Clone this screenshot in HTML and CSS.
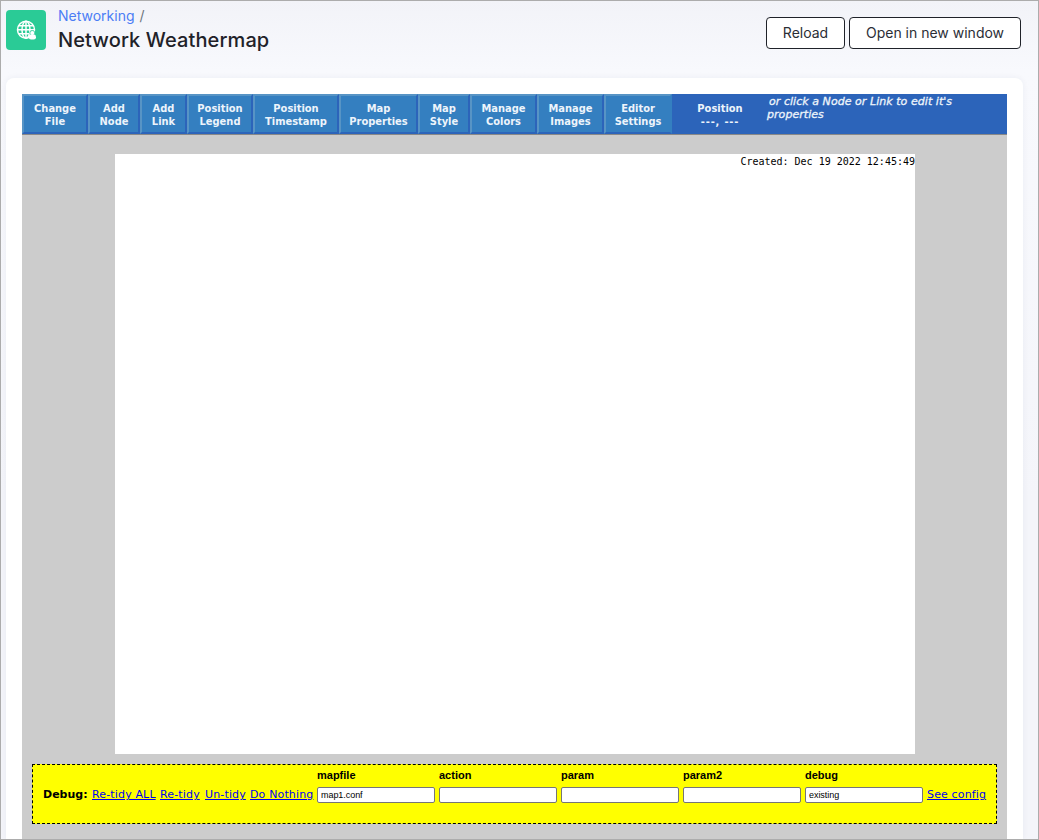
FILE: index.html
```html
<!DOCTYPE html>
<html lang="en">
<head>
<meta charset="utf-8">
<title>Network Weathermap</title>
<link rel="stylesheet" href="styles.css">
</head>
<body>
<div class="page">
  <header class="header">
    <div class="logo">
      <svg width="20" height="20" viewBox="0 0 20 20" fill="none" stroke="#fff" stroke-width="1.5">
        <circle cx="10" cy="9.8" r="8.5"/>
        <ellipse cx="10" cy="9.8" rx="4" ry="8.5"/>
        <path d="M10 1.3v17M2.5 5.8h15M1.5 9.8h17M2.5 13.8h15"/>
        <circle cx="16.3" cy="13" r="2.5" fill="#fff" stroke="#2acb96" stroke-width=".8"/>
        <rect x="12.8" y="14.6" width="7.2" height="5" rx="2.3" fill="#fff" stroke="none"/>
      </svg>
    </div>
    <div class="heading">
      <div class="crumb"><a class="crumb-link">Networking</a><span class="slash">/</span></div>
      <h1 class="title">Network Weathermap</h1>
    </div>
    <div class="actions">
      <button class="btn reload"><span>Reload</span></button>
      <button class="btn open"><span>Open in new window</span></button>
    </div>
  </header>
  <main class="card">
    <nav class="toolbar">
      <div class="tool">Change<br>File</div>
      <div class="tool">Add<br>Node</div>
      <div class="tool">Add<br>Link</div>
      <div class="tool">Position<br>Legend</div>
      <div class="tool">Position<br>Timestamp</div>
      <div class="tool">Map<br>Properties</div>
      <div class="tool">Map<br>Style</div>
      <div class="tool">Manage<br>Colors</div>
      <div class="tool">Manage<br>Images</div>
      <div class="tool last">Editor<br>Settings</div>
      <div class="position">Position<br><span class="coords">---, ---</span></div>
      <div class="hint"><span class="hint-first">or click a Node or Link to edit it's</span><br>properties</div>
    </nav>
    <section class="workspace">
      <div class="map"><span class="created">Created: Dec 19 2022 12:45:49</span></div>
      <form class="debug">
        <b class="debug-label">Debug:</b>
        <a class="link retidy-all">Re-tidy ALL</a>
        <a class="link retidy">Re-tidy</a>
        <a class="link untidy">Un-tidy</a>
        <a class="link nothing">Do Nothing</a>
        <label class="field">mapfile<input value="map1.conf"></label>
        <label class="field">action<input></label>
        <label class="field">param<input></label>
        <label class="field">param2<input></label>
        <label class="field">debug<input value="existing"></label>
        <a class="link config">See config</a>
      </form>
    </section>
  </main>
</div>
</body>
</html>
```
FILE: styles.css
```css
* { box-sizing: border-box; }
body { margin: 0; font-family: Inter, sans-serif; }
.page {
  width: 1039px; height: 840px; overflow: hidden;
  border: 1px solid #acacac;
  background: linear-gradient(#f2f3f8, #f8f9fd 70px, #f4f5fa 500px);
  display: flex; flex-direction: column;
}
.header { display: flex; height: 77px; flex: none; padding: 0 17px 0 5px; }
.logo {
  width: 40px; height: 40px; margin-top: 9px; border-radius: 4px;
  background: #2acb96; display: flex; align-items: center; justify-content: center;
}
.heading { margin-left: 12px; padding-top: 6px; flex: 1; white-space: nowrap; }
.crumb { font-size: 14px; line-height: 18px; }
.crumb-link { color: #4b7df5; }
.slash { color: #6c757d; margin-left: 5px; }
.title { margin: 3px 0 0; font-size: 20px; line-height: 24px; font-weight: 500; letter-spacing: .11px; color: #1f2229; }
.actions { display: flex; gap: 4px; margin-top: 16px; }
.btn {
  height: 32px; padding: 0 0 2px; border: 1px solid #1f2229; border-radius: 4px;
  background: #fff; color: #2b2e36; font: 14px Inter, sans-serif;
}
.reload { width: 79px; }
.open { width: 172px; }
.card {
  flex: 1; margin: 0 15px 0 5px; padding: 16px 16px 0;
  background: #fff; border-radius: 8px 8px 0 0;
  box-shadow: 0 0 6px rgba(40, 50, 90, .06);
  display: flex; flex-direction: column;
}
.toolbar {
  display: grid; flex: none; height: 41px;
  grid-template-columns: 66px 52px 47px 66px 86px 79px 52px 67px 67px 68px 95px 1fr;
  background: #2c64ba; border-bottom: 1px solid #888;
  color: #edf4fb; font: 700 11px/13px "DejaVu Sans Condensed", "DejaVu Sans", sans-serif;
  font-stretch: condensed; text-align: center; white-space: nowrap;
}
.tool {
  padding-top: 6px; background: #347fc0;
  border: 2px solid; border-color: #5794c5 #2c64ba #2c64ba #5794c5;
}
.last { border-right-color: #347fc0; }
.position { padding: 8px 0 0 1px; }
.coords { letter-spacing: .8px; }
.hint {
  padding-top: 1px; letter-spacing: .05px;
  font: italic 500 11px/13px "DejaVu Sans", sans-serif; text-align: left;
  -webkit-text-stroke: .3px #edf4fb;
}
.hint-first { margin-left: 2px; }
.workspace { flex: 1; background: #ccc; padding: 19px 10px 0; }
.map { width: 800px; height: 600px; margin-left: 83px; background: #fff; text-align: right; }
.created { font: 10px/16px "DejaVu Sans Mono", monospace; color: #000; display: block; }
.debug {
  margin-top: 10px; height: 60px; border: 1px dashed #000; background: #ff0;
  display: flex; gap: 4px; padding: 4px 0 0 10px;
  font: 11px/14px "DejaVu Sans", sans-serif; color: #000; white-space: nowrap;
}
.debug-label, .link { margin-top: 19px; flex: none; }
.debug-label { width: 45px; }
.link { color: #00e; text-decoration: underline; letter-spacing: .15px; }
.retidy-all { width: 64px; }
.retidy, .untidy { width: 41px; }
.nothing { width: 63px; }
.config { width: 60px; }
.field { width: 118px; flex: none; font: 700 11px/13px "Liberation Sans", sans-serif; }
.field input {
  display: block; width: 118px; height: 16px; margin: 5px 0 0; padding: 0 3px;
  border: 1px solid #767676; border-radius: 2px; background: #fff; color: #000;
  font: 9px "Liberation Sans", sans-serif; letter-spacing: -.05px;
}
```
